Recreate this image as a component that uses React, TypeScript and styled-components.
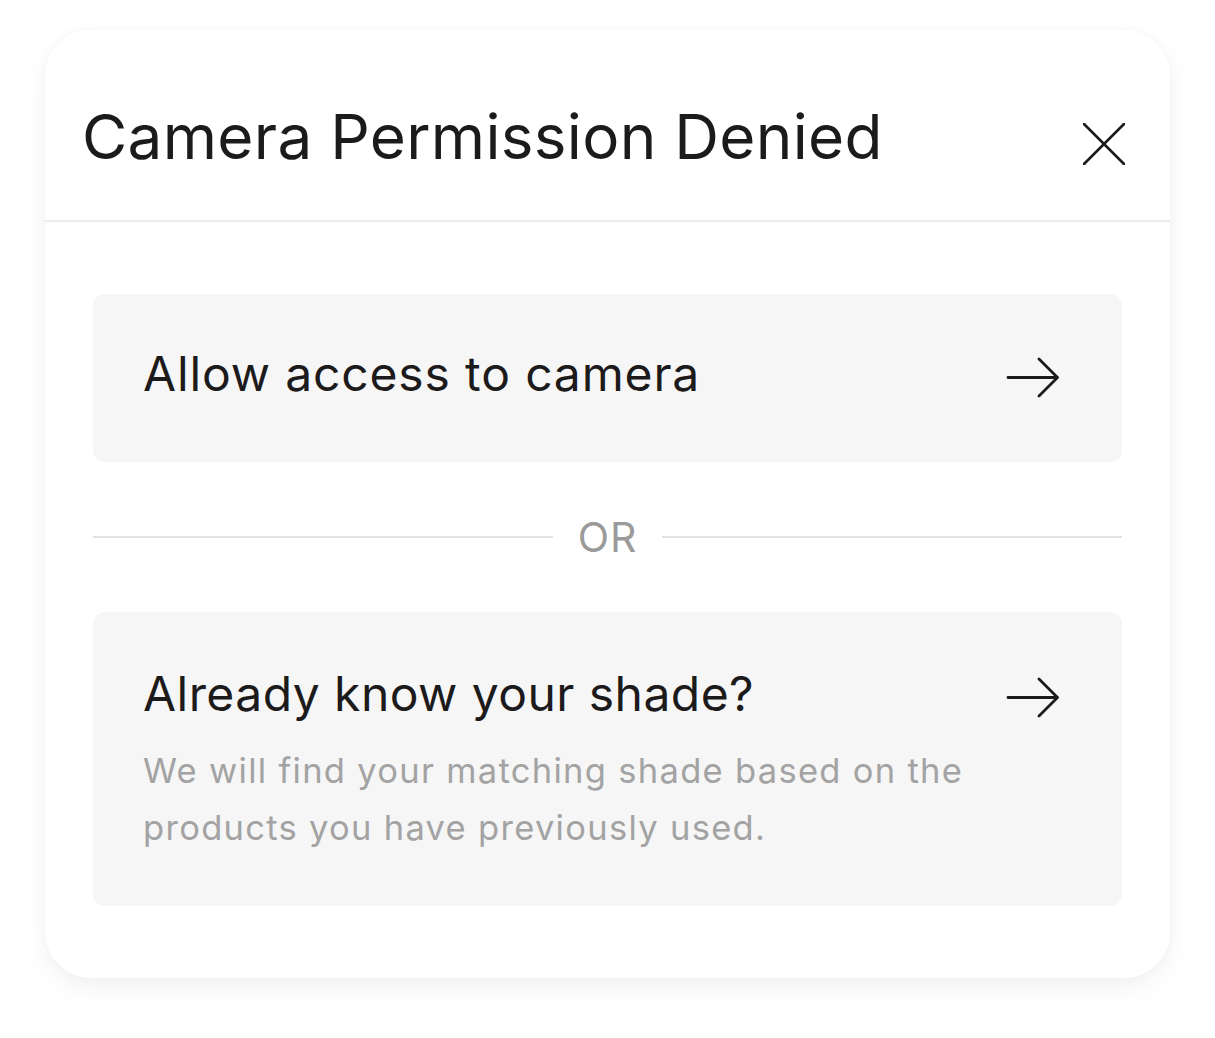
import styled, { createGlobalStyle } from 'styled-components'

const GlobalStyle = createGlobalStyle`
  html, body {
    margin: 0;
    padding: 0;
    background: #fff;
    font-family: Inter, 'Noto Sans', sans-serif;
    color: #1c1a1b;
  }
`

const Page = styled.div`
  width: 1215px;
  height: 1038px;
  box-sizing: border-box;
  padding: 30px 45px 0 45px;
`

const Card = styled.div`
  width: 1125px;
  height: 948px;
  box-sizing: border-box;
  background: #fff;
  border-radius: 46px;
  box-shadow: 0 10px 26px rgba(0, 0, 0, 0.05), 0 0 8px rgba(0, 0, 0, 0.03);
  overflow: hidden;
`

const Header = styled.header`
  height: 192px;
  box-sizing: border-box;
  display: flex;
  align-items: center;
  justify-content: space-between;
  padding: 24px 44px 0 37px;
  border-bottom: 2px solid #ececec;
`

const Title = styled.h1`
  margin: 0;
  font-size: 62px;
  font-weight: 400;
  letter-spacing: 0.3px;
  line-height: 1;
`

const CloseButton = styled.button`
  border: 0;
  background: transparent;
  padding: 0;
  margin-top: 14px;
  width: 44px;
  height: 44px;
  display: flex;
  align-items: center;
  justify-content: center;
  cursor: pointer;
`

const Body = styled.div`
  padding: 72px 48px 72px 48px;
  display: flex;
  flex-direction: column;
`

const Option = styled.button<{ $tall?: boolean }>`
  width: 100%;
  border: 0;
  border-radius: 12px;
  background: #f6f6f6;
  box-sizing: border-box;
  text-align: left;
  font-family: inherit;
  color: inherit;
  cursor: pointer;
  height: ${(p) => (p.$tall ? '294px' : '168px')};
  padding: ${(p) => (p.$tall ? '52px 62px 0 50px' : '0 62px 0 50px')};
  display: flex;
  flex-direction: column;
  justify-content: ${(p) => (p.$tall ? 'flex-start' : 'center')};
`

const OptionRow = styled.div`
  display: flex;
  align-items: center;
  justify-content: space-between;
`

const OptionLabel = styled.span<{ $spacing: number }>`
  font-size: 48px;
  font-weight: 400;
  line-height: 60px;
  margin-bottom: 8px;
  letter-spacing: ${(p) => p.$spacing}px;
`

const OptionText = styled.p`
  margin: 10px 0 0 0;
  font-size: 34.5px;
  line-height: 57px;
  letter-spacing: 1.3px;
  color: #a3a3a3;
  max-width: 880px;
`

const Divider = styled.div`
  display: flex;
  align-items: center;
  gap: 25px;
  height: 150px;

  &::before,
  &::after {
    content: '';
    flex: 1;
    height: 2px;
    background: #e2e2e2;
  }
`

const DividerText = styled.span`
  font-size: 41px;
  letter-spacing: 1px;
  color: #9a9a9a;
`

const CloseIcon = () => (
  <svg width="42" height="42" viewBox="0 0 42 42" fill="none">
    <path d="M1 1L41 41M41 1L1 41" stroke="#1c1a1b" strokeWidth="2.6" strokeLinecap="round" />
  </svg>
)

const ArrowIcon = () => (
  <svg width="54" height="42" viewBox="0 0 54 42" fill="none">
    <path
      d="M2 20.5H51.5M33 2L51.5 20.5L33 39"
      stroke="#1c1a1b"
      strokeWidth="2.8"
      strokeLinecap="round"
      strokeLinejoin="round"
    />
  </svg>
)

export default function App() {
  return (
    <Page>
      <GlobalStyle />
      <Card>
        <Header>
          <Title>Camera Permission Denied</Title>
          <CloseButton aria-label="Close">
            <CloseIcon />
          </CloseButton>
        </Header>
        <Body>
          <Option>
            <OptionRow>
              <OptionLabel $spacing={0.85}>Allow access to camera</OptionLabel>
              <ArrowIcon />
            </OptionRow>
          </Option>
          <Divider>
            <DividerText>OR</DividerText>
          </Divider>
          <Option $tall>
            <OptionRow>
              <OptionLabel $spacing={0.45}>Already know your shade?</OptionLabel>
              <ArrowIcon />
            </OptionRow>
            <OptionText>
              We will find your matching shade based on the products you have previously used.
            </OptionText>
          </Option>
        </Body>
      </Card>
    </Page>
  )
}
